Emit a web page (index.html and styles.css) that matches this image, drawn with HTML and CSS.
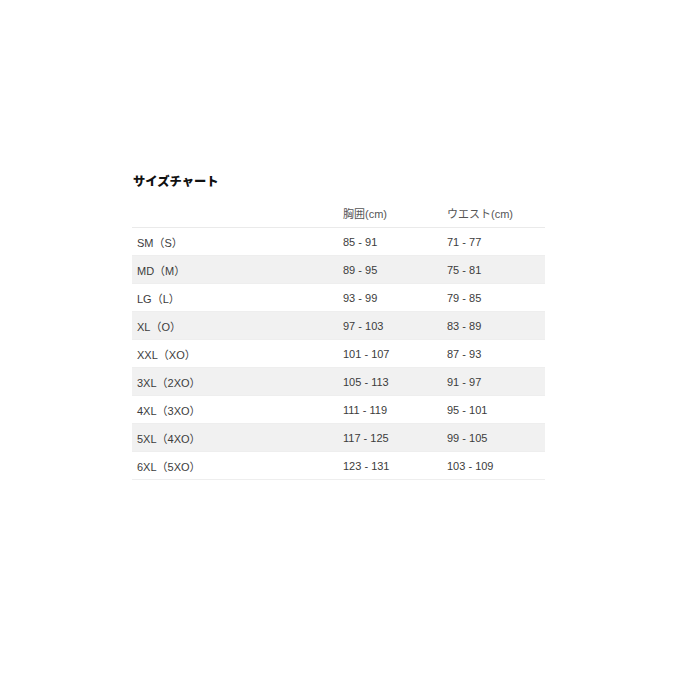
FILE: index.html
```html
<!DOCTYPE html>
<html lang="ja">
<head>
<meta charset="utf-8">
<link rel="stylesheet" href="styles.css">
</head>
<body>
<div class="wrap">
  <h2 class="title">サイズチャート</h2>
  <table class="chart">
    <thead>
      <tr><th></th><th>胸囲(cm)</th><th>ウエスト(cm)</th></tr>
    </thead>
    <tbody>
      <tr><td>SM（S）</td><td>85 - 91</td><td>71 - 77</td></tr>
      <tr><td>MD（M）</td><td>89 - 95</td><td>75 - 81</td></tr>
      <tr><td>LG（L）</td><td>93 - 99</td><td>79 - 85</td></tr>
      <tr><td>XL（O）</td><td>97 - 103</td><td>83 - 89</td></tr>
      <tr><td>XXL（XO）</td><td>101 - 107</td><td>87 - 93</td></tr>
      <tr><td>3XL（2XO）</td><td>105 - 113</td><td>91 - 97</td></tr>
      <tr><td>4XL（3XO）</td><td>111 - 119</td><td>95 - 101</td></tr>
      <tr><td>5XL（4XO）</td><td>117 - 125</td><td>99 - 105</td></tr>
      <tr><td>6XL（5XO）</td><td>123 - 131</td><td>103 - 109</td></tr>
    </tbody>
  </table>
</div>
</body>
</html>
```
FILE: styles.css
```css
html, body {
  margin: 0;
  padding: 0;
  background: #fff;
}
body {
  font-family: "Liberation Sans", "Noto Sans CJK JP", sans-serif;
  color: #3c3c3c;
}
.wrap {
  width: 413px;
  padding: 173px 0 0 132px;
}
.title {
  margin: 0 0 0 1px;
  font-size: 12.3px;
  line-height: 18px;
  font-weight: 900;
  color: #111;
}
.chart {
  margin-top: 8px;
  width: 413px;
  border-collapse: collapse;
  font-size: 11px;
}
.chart th {
  font-weight: normal;
  text-align: left;
  height: 28px;
  padding: 0;
  color: #555;
  vertical-align: middle;
  border-bottom: 1px solid #eaeaea;
}
.chart td {
  height: 27px;
  padding: 0;
  border-bottom: 1px solid #eeeeee;
  vertical-align: middle;
}
.chart td:first-child { padding-left: 5px; width: 206px; }
.chart th:first-child { width: 211px; }
.chart th:nth-child(2), .chart td:nth-child(2) { width: 104px; }
.chart tbody tr:nth-child(even) td { background: #f1f1f1; }
```
